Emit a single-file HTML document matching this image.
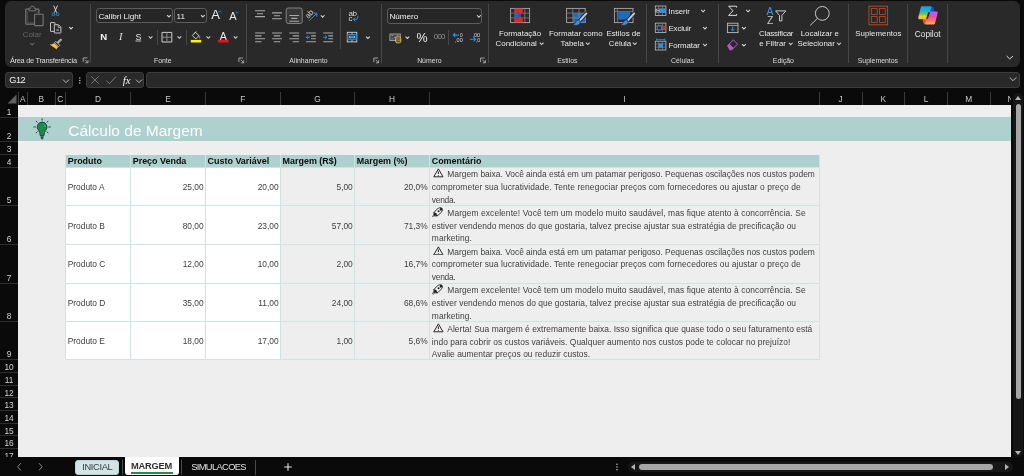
<!DOCTYPE html>
<html lang="pt-BR">
<head>
<meta charset="utf-8">
<title>Cálculo de Margem</title>
<style>
*{box-sizing:border-box;margin:0;padding:0}
html,body{width:1024px;height:476px;overflow:hidden;background:#0a0a0a;font-family:"Liberation Sans",sans-serif;}
#app{position:relative;width:1024px;height:476px;overflow:hidden;will-change:transform;color:#e6e6e6}
.abs{position:absolute}
/* ribbon */
#ribbon{position:absolute;left:5.2px;top:0.5px;width:1014.4px;height:66px;background:#292929;border-radius:6px}
.gl{position:absolute;top:55.7px;font-size:6.9px;line-height:9px;color:#dcdcdc;white-space:nowrap;transform:translateX(-50%)}
.vsep{position:absolute;top:4px;width:1px;height:59px;background:#474747}
.t{position:absolute;white-space:nowrap;color:#e8e8e8;font-size:7.9px;line-height:10px}
.tc{transform:translateX(-50%);text-align:center}
.combo{position:absolute;height:15.3px;border:1px solid #5c5c5c;border-radius:3px;background:#262626;font-size:8.1px;line-height:13.3px;color:#f0f0f0;padding:0.9px 0 0 1.2px;white-space:nowrap}
.tabt{font-size:9.3px;line-height:11px;white-space:nowrap}
/* formula bar */
.fbox{position:absolute;top:72px;height:16px;background:#292929;border:1px solid #3d3d3d;border-radius:3px}
/* grid */
#sheet{position:absolute;left:18px;top:104.5px;width:993.3px;height:352.2px;background:#eeeeee}
.ch{position:absolute;top:92.8px;height:12px;font-size:8.3px;line-height:12px;color:#c8c8c8;text-align:center}
.cl{position:absolute;top:92px;width:1px;height:12.5px;background:#3a3a3a}
.rh{position:absolute;left:0;width:18px;text-align:center;font-size:8.3px;line-height:10px;color:#d6d6d6}
.rl{position:absolute;left:0;width:18px;height:1px;background:#2e2e2e}
#title{font-size:15.5px;line-height:18px;color:#fbfdfd;white-space:nowrap}
.cell{position:absolute;font-size:8.4px;color:#404040;white-space:nowrap;overflow:hidden}
.hd{background:#aed0cf;color:#0c0c0c;font-weight:bold;padding-left:2.2px;font-size:8.95px;line-height:13.6px}
.w{background:#ffffff}
.g{background:#eeeeee}
.num{text-align:right;padding-right:1.8px}
.txt{padding-left:2.2px}
.bd{position:absolute;background:#cfe3e1}
.cm{position:absolute;left:431.8px;width:388px;font-size:8.43px;line-height:12.75px;color:#404040;white-space:nowrap}
.i1{display:inline-block;width:15.5px;height:10px;padding-left:1px;text-align:left;vertical-align:-1.3px;line-height:0}
.ic{display:block}
</style>
</head>
<body>
<div id="app">
<!-- ribbon -->
<div id="ribbon"></div>
<div class="vsep" style="left:90.2px"></div>
<div class="vsep" style="left:246.2px"></div>
<div class="vsep" style="left:381.2px"></div>
<div class="vsep" style="left:488.3px"></div>
<div class="vsep" style="left:646.3px"></div>
<div class="vsep" style="left:718.2px"></div>
<div class="vsep" style="left:848px"></div>
<div class="vsep" style="left:907.2px"></div>
<div class="vsep" style="left:947px"></div>
<div class="vsep" style="left:157.2px;top:29.5px;height:15.5px"></div>
<div class="vsep" style="left:186.3px;top:29.5px;height:15.5px"></div>
<div class="vsep" style="left:340.2px;top:8px;height:40.5px"></div>
<div class="vsep" style="left:448.2px;top:29.5px;height:15.5px"></div>
<!-- group labels -->
<div class="gl" style="left:43.3px;font-size:7.4px;letter-spacing:-0.28px">Área de Transferência</div>
<div class="gl" style="left:162.8px">Fonte</div>
<div class="gl" style="left:308.5px">Alinhamento</div>
<div class="gl" style="left:429.4px">Número</div>
<div class="gl" style="left:567.3px">Estilos</div>
<div class="gl" style="left:682.6px">Células</div>
<div class="gl" style="left:783.4px">Edição</div>
<div class="gl" style="left:877.9px">Suplementos</div>
<!-- clipboard group -->
<div class="t tc" style="left:32.2px;top:29.6px;color:#666666">Colar</div>
<!-- font group -->
<div class="combo" style="left:96.2px;top:8.2px;width:76.6px">Calibri Light</div>
<div class="combo" style="left:174.4px;top:8.2px;width:32.3px">11</div>
<div class="t" style="left:211.2px;top:8.1px;font-size:13px;line-height:14px;color:#ececec">A</div>
<div class="t" style="left:229.2px;top:9.7px;font-size:11px;line-height:12px;color:#ececec">A</div>
<div class="t" style="left:100.2px;top:31.6px;font-size:9.6px;font-weight:bold;color:#f4f4f4">N</div>
<div class="t" style="left:119px;top:32.3px;font-size:10.5px;font-style:italic;font-family:'Liberation Serif',serif;color:#e0e0e0">I</div>
<div class="t" style="left:135.5px;top:31.9px;font-size:9px;color:#e0e0e0">S</div>
<div class="t" style="left:217.8px;top:30.2px;font-size:10.6px;line-height:12px;color:#ececec;width:11px;text-align:center">A</div>
<!-- number group -->
<div class="combo" style="left:387.3px;top:8.3px;width:95.2px;height:15.4px">Número</div>
<div class="t" style="left:416.6px;top:30.8px;font-size:12.5px;line-height:14px;color:#ececec;letter-spacing:-0.4px">%</div>
<div class="t" style="left:433.7px;top:32.2px;font-size:8px;color:#909090;letter-spacing:-0.75px">000</div>
<!-- styles group -->
<div class="t tc" style="left:520px;top:28.7px">Formatação</div>
<div class="t tc" style="left:516.2px;top:38.9px">Condicional</div>
<div class="t tc" style="left:575.8px;top:28.7px">Formatar como</div>
<div class="t tc" style="left:572.2px;top:38.9px">Tabela</div>
<div class="t tc" style="left:623.5px;top:28.7px">Estilos de</div>
<div class="t tc" style="left:620px;top:38.9px">Célula</div>
<!-- cells group -->
<div class="t" style="left:668.5px;top:6.9px;letter-spacing:-0.1px">Inserir</div>
<div class="t" style="left:668.5px;top:23.9px;letter-spacing:-0.15px">Excluir</div>
<div class="t" style="left:668.5px;top:41px;letter-spacing:-0.1px">Formatar</div>
<!-- editing group -->
<div class="t tc" style="left:776.2px;top:28.7px;letter-spacing:-0.2px">Classificar</div>
<div class="t tc" style="left:772.6px;top:39px">e Filtrar</div>
<div class="t tc" style="left:819.8px;top:28.7px">Localizar e</div>
<div class="t tc" style="left:816.2px;top:39px">Selecionar</div>
<div class="t tc" style="left:878.3px;top:28.5px">Suplementos</div>
<div class="t tc" style="left:927.7px;top:28.5px;font-size:8.3px">Copilot</div>
<svg class="abs" style="left:0;top:0" width="1024" height="68" viewBox="0 0 1024 68">
<!-- paste -->
<path d="M29 9.2H26.4Q25.8 9.2 25.8 9.8V23.5Q25.8 24.1 26.4 24.1H34.2M35.8 9.2H38.3Q38.9 9.2 38.9 9.8V13.6" fill="none" stroke="#767676" stroke-width="1.2"/>
<path d="M27.6 11V22.4H34M37.2 11V13.4" fill="none" stroke="#555" stroke-width="0.7"/>
<path d="M29 10.8V8.3H30.7V7.3Q30.7 6.3 31.6 6.3H33.2Q34.1 6.3 34.1 7.3V8.3H35.8V10.8Z" fill="none" stroke="#767676" stroke-width="1"/>
<rect x="34.6" y="14.3" width="8.5" height="11.3" rx="0.5" fill="#292929" stroke="#767676" stroke-width="1.1"/>
<path d="M30.1 43.10L32.1 44.90L34.1 43.10" fill="none" stroke="#6a6a6a" stroke-width="1.05"/>
<!-- scissors -->
<path d="M53.7 5.6L56.6 12.6M57.5 5.6L54.4 12.6" fill="none" stroke="#e0e0e0" stroke-width="0.9"/>
<circle cx="53.5" cy="14.3" r="1.35" fill="none" stroke="#2f8fe0" stroke-width="0.9"/><circle cx="57.6" cy="14.3" r="1.35" fill="none" stroke="#2f8fe0" stroke-width="0.9"/>
<!-- copy -->
<path d="M54.2 31.4H50.9Q50.5 31.4 50.5 31V23Q50.5 22.6 50.9 22.6H54.6Q55 22.6 55 23V24.4" fill="none" stroke="#d6d6d6" stroke-width="0.9"/>
<path d="M54.3 24.7H58.4L60.9 27.2V32.6Q60.9 33 60.5 33H54.7Q54.3 33 54.3 32.6Z" fill="none" stroke="#d6d6d6" stroke-width="0.9"/>
<path d="M58.2 24.9V27.4H60.7" fill="none" stroke="#d6d6d6" stroke-width="0.7"/>
<path d="M56.4 29.2H59V30.9H56.4Z" fill="#8a8a8a"/>
<path d="M69.2 27.05L71.0 28.95L72.8 27.05" fill="none" stroke="#d4d4d4" stroke-width="1.05"/>
<!-- format painter -->
<path d="M60.8 39.7L58.2 42.3" stroke="#d8d8d8" stroke-width="2" stroke-linecap="round" fill="none"/><path d="M60.7 39.8L58.6 41.9" stroke="#292929" stroke-width="0.6" stroke-linecap="round" fill="none"/>
<path d="M55.8 41.4L59.8 45.4L58.5 46.7L54.5 42.7Z" fill="#292929" stroke="#d8d8d8" stroke-width="0.8" stroke-linejoin="round"/>
<path d="M54.3 43.2L58 46.9L56.6 48.9L50.5 44.7Z" fill="#f6c84a"/>
<path d="M50.5 44.7L56.6 48.9" stroke="#ee9a2c" stroke-width="1" stroke-linecap="round"/>
<path d="M87.4 57.9H83.2V62.1" fill="none" stroke="#bdbdbd" stroke-width="0.8"/>
<path d="M85.0 59.7L87.8 62.5M88.0 60.1V62.7H85.4" fill="none" stroke="#bdbdbd" stroke-width="0.8"/>
<path d="M167.1 15.05L168.9 16.95L170.8 15.05" fill="none" stroke="#d4d4d4" stroke-width="1.05"/>
<path d="M201.0 15.05L202.8 16.95L204.7 15.05" fill="none" stroke="#d4d4d4" stroke-width="1.05"/>
<path d="M218.2 12.4L219.7 10.9L221.2 12.4" fill="none" stroke="#2f8fe0" stroke-width="0.9"/>
<path d="M235.6 11.8L237 13.2L238.4 11.8" fill="none" stroke="#2f8fe0" stroke-width="0.9"/>
<path d="M135.4 41H141.2" stroke="#d0d0d0" stroke-width="0.9"/>
<path d="M148.8 36.35L150.6 38.25L152.4 36.35" fill="none" stroke="#d4d4d4" stroke-width="1.05"/>
<!-- borders -->
<path d="M162 32.4V42H171.8V32.4M162 32.4H171.8" fill="none" stroke="#d0d0d0" stroke-width="1"/>
<path d="M166.9 32.4V42M162 37.2H171.8" fill="none" stroke="#9a9a9a" stroke-width="0.9"/>
<path d="M177.6 36.35L179.4 38.25L181.2 36.35" fill="none" stroke="#d4d4d4" stroke-width="1.05"/>
<!-- fill -->
<path d="M195.4 32.3L199 35.7L195.9 38.9L192.3 35.5Z" fill="none" stroke="#dcdcdc" stroke-width="0.9"/>
<path d="M194.2 33.3L196.6 31.6" stroke="#dcdcdc" stroke-width="0.8"/>
<path d="M199.4 35.3Q200.6 36.9 200.4 38.3Q199.6 39 199 38.2Q198.8 36.8 199.4 35.3Z" fill="#2f8fe0"/>
<rect x="190.8" y="39.9" width="10.4" height="2.6" fill="#fff100"/>
<path d="M206.5 36.35L208.3 38.25L210.2 36.35" fill="none" stroke="#d4d4d4" stroke-width="1.05"/>
<rect x="217.9" y="39.9" width="10.6" height="2.6" fill="#e81123"/>
<path d="M233.8 36.35L235.6 38.25L237.4 36.35" fill="none" stroke="#d4d4d4" stroke-width="1.05"/>
<path d="M243.1 58.0H238.9V62.2" fill="none" stroke="#bdbdbd" stroke-width="0.8"/>
<path d="M240.7 59.8L243.5 62.6M243.7 60.2V62.8H241.1" fill="none" stroke="#bdbdbd" stroke-width="0.8"/>
<path d="M255.1 10.8H265.0M257.0 13.7H263.1M255.1 16.6H265.0" stroke="#a8a8a8" stroke-width="1.1" fill="none"/>
<path d="M272.1 12.9H281.9M274.0 15.8H280.0M272.1 18.7H281.9" stroke="#a8a8a8" stroke-width="1.1" fill="none"/>
<rect x="286.2" y="8" width="16" height="15.5" rx="2" fill="#383838" stroke="#8c8c8c" stroke-width="0.9"/>
<path d="M289.3 15.5H299.1M291.2 18.4H297.2M289.3 21.3H299.1" stroke="#a8a8a8" stroke-width="1.1" fill="none"/>
<!-- orientation -->
<text x="305.2" y="16.8" font-size="7.8" fill="#d4d4d4" font-family="Liberation Sans, sans-serif" letter-spacing="-0.3" transform="rotate(-50 309.2 14.2)">ab</text>
<path d="M309.2 20.8L316.6 13.4M313.4 13.2H316.8V16.6" fill="none" stroke="#2f8fe0" stroke-width="1"/>
<path d="M320.8 15.25L322.6 17.15L324.5 15.25" fill="none" stroke="#d4d4d4" stroke-width="1.05"/>
<!-- wrap -->
<text x="348.4" y="15.8" font-size="8" fill="#d8d8d8" font-family="Liberation Sans, sans-serif" letter-spacing="-0.4">ab</text>
<text x="348.4" y="21.4" font-size="8" fill="#d8d8d8" font-family="Liberation Sans, sans-serif">c</text>
<path d="M357.8 16V17.4Q357.8 19.4 355.8 19.4H353.6M355.4 17.4L353.4 19.4L355.4 21.4" fill="none" stroke="#2f8fe0" stroke-width="1"/>
<path d="M255.1 33.0H265.0M255.1 35.9H261.5M255.1 38.8H265.0M255.1 41.7H261.5" stroke="#a8a8a8" stroke-width="1.1" fill="none"/>
<path d="M272.1 33.0H281.9M273.8 35.9H280.2M272.1 38.8H281.9M273.8 41.7H280.2" stroke="#a8a8a8" stroke-width="1.1" fill="none"/>
<path d="M289.3 33.0H299.1M292.7 35.9H299.1M289.3 38.8H299.1M292.7 41.7H299.1" stroke="#a8a8a8" stroke-width="1.1" fill="none"/>
<path d="M306.1 33.0H315.9M311.1 35.9H315.9M311.1 38.8H315.9M306.1 41.7H315.9" stroke="#a8a8a8" stroke-width="1.1" fill="none"/>
<path d="M310 37.3H306.4M308.2 35.5L306.4 37.3L308.2 39.1" fill="none" stroke="#2f8fe0" stroke-width="1"/>
<path d="M323.3 33.0H333.1M328.3 35.9H333.1M328.3 38.8H333.1M323.3 41.7H333.1" stroke="#a8a8a8" stroke-width="1.1" fill="none"/>
<path d="M323.4 37.3H327M325.2 35.5L327 37.3L325.2 39.1" fill="none" stroke="#2f8fe0" stroke-width="1"/>
<!-- merge -->
<rect x="347.3" y="32.3" width="9.5" height="9.6" fill="none" stroke="#d6d6d6" stroke-width="0.9"/>
<rect x="347.5" y="34.5" width="9.1" height="5.2" fill="#1a4f80" stroke="#2f8fe0" stroke-width="0.9"/>
<path d="M349.2 37.1H354.9M350.4 35.9L349.2 37.1L350.4 38.3M353.7 35.9L354.9 37.1L353.7 38.3" fill="none" stroke="#bfe0ff" stroke-width="0.7"/>
<path d="M352 32.3V34.2M352 40V41.9" stroke="#d6d6d6" stroke-width="0.8"/>
<path d="M366.0 36.55L367.9 38.45L369.8 36.55" fill="none" stroke="#d4d4d4" stroke-width="1.05"/>
<path d="M378.0 58.0H373.8V62.2" fill="none" stroke="#bdbdbd" stroke-width="0.8"/>
<path d="M375.6 59.8L378.4 62.6M378.6 60.2V62.8H376.0" fill="none" stroke="#bdbdbd" stroke-width="0.8"/>
<path d="M477.0 15.25L478.9 17.15L480.8 15.25" fill="none" stroke="#d4d4d4" stroke-width="1.05"/>
<!-- currency -->
<rect x="389.9" y="34" width="10.4" height="6.6" fill="#484848" stroke="#a8a8a8" stroke-width="0.9"/>
<path d="M391.6 35.6H393M391.6 39H393M397 35.6H398.6M394 37.3H396" stroke="#9c9c9c" stroke-width="0.9"/>
<rect x="395.6" y="37" width="5.2" height="5.8" rx="1.4" fill="#292929" stroke="#f0c44c" stroke-width="0.9"/>
<path d="M395.8 39H400.6M395.8 40.9H400.6" stroke="#f0c44c" stroke-width="0.8"/>
<path d="M405.5 36.55L407.4 38.45L409.2 36.55" fill="none" stroke="#d4d4d4" stroke-width="1.05"/>
<path d="M453.2 35.1H458.9M455.2 33.1L453.2 35.1L455.2 37.1" fill="none" stroke="#2f8fe0" stroke-width="1.05"/>
<text x="460.1" y="36.8" font-size="6.2" textLength="2.6" font-family="Liberation Sans, sans-serif" fill="#d6d6d6" lengthAdjust="spacingAndGlyphs">0</text>
<text x="455.1" y="42.4" font-size="6.2" textLength="7.6" font-family="Liberation Sans, sans-serif" fill="#d6d6d6" lengthAdjust="spacingAndGlyphs">,00</text>
<text x="472.4" y="36.8" font-size="6.2" textLength="7.6" font-family="Liberation Sans, sans-serif" fill="#d6d6d6" lengthAdjust="spacingAndGlyphs">,00</text>
<path d="M469.8 39.3H475.6M473.6 37.3L475.6 39.3L473.6 41.3" fill="none" stroke="#2f8fe0" stroke-width="1.05"/>
<text x="475.8" y="42.4" font-size="6.2" textLength="4.2" font-family="Liberation Sans, sans-serif" fill="#d6d6d6" lengthAdjust="spacingAndGlyphs">,0</text>
<path d="M484.8 58.0H480.6V62.2" fill="none" stroke="#bdbdbd" stroke-width="0.8"/>
<path d="M482.4 59.8L485.2 62.6M485.4 60.2V62.8H482.8" fill="none" stroke="#bdbdbd" stroke-width="0.8"/>
<!-- cond format -->
<rect x="510.6" y="8.4" width="19" height="14.2" fill="none" stroke="#a8a8a8" stroke-width="0.9"/>
<path d="M510.6 13.1H529.6M510.6 17.9H529.6M515.3 8.4V22.6M520.1 8.4V22.6M524.8 8.4V22.6" stroke="#8c8c8c" stroke-width="0.7"/>
<rect x="514.2" y="8.6" width="8.6" height="4.2" fill="#e3262d"/><rect x="514.2" y="13.6" width="5.2" height="3.8" fill="#1b6ac6"/><rect x="514.2" y="18.2" width="8.6" height="4.2" fill="#e3262d"/>
<path d="M539.8 42.65L541.6 44.55L543.5 42.65" fill="none" stroke="#d4d4d4" stroke-width="1.05"/>
<!-- format as table -->
<rect x="566.6" y="8.4" width="18.6" height="14.2" fill="none" stroke="#a8a8a8" stroke-width="0.9"/>
<rect x="573" y="13.2" width="12" height="9.2" fill="#1b6ac6"/>
<path d="M566.6 13.1H585.2M566.6 17.9H585.2M572.8 8.4V22.6M579 8.4V22.6" stroke="#8c8c8c" stroke-width="0.7"/>
<path d="M586.6 13.2L579.4 21" stroke="#292929" stroke-width="3.6" stroke-linecap="round"/><path d="M586.4 13.4L579.6 20.8" stroke="#d0d0d0" stroke-width="1.8" stroke-linecap="round"/>
<path d="M579.8 20.2Q581.4 22.8 578.6 24.8Q575.6 26.2 572.8 24.6Q575.6 23.8 576 21.4Q577.8 19.2 579.8 20.2Z" fill="#3a8ee6" stroke="#292929" stroke-width="0.6"/>
<path d="M585.9 42.65L587.8 44.55L589.6 42.65" fill="none" stroke="#d4d4d4" stroke-width="1.05"/>
<!-- cell styles -->
<rect x="614.4" y="8.4" width="18.6" height="14.2" fill="none" stroke="#a8a8a8" stroke-width="0.9"/>
<path d="M614.4 11.4H633M617.4 8.4V22.6" stroke="#8c8c8c" stroke-width="0.7"/>
<rect x="618.2" y="12" width="12" height="7.6" fill="#1b6ac6"/>
<path d="M634.4 13.2L627.2 21" stroke="#292929" stroke-width="3.6" stroke-linecap="round"/><path d="M634.2 13.4L627.4 20.8" stroke="#d0d0d0" stroke-width="1.8" stroke-linecap="round"/>
<path d="M627.6 20.2Q629.2 22.8 626.4 24.8Q623.4 26.2 620.6 24.6Q623.4 23.8 623.8 21.4Q625.6 19.2 627.6 20.2Z" fill="#3a8ee6" stroke="#292929" stroke-width="0.6"/>
<path d="M632.9 42.65L634.8 44.55L636.6 42.65" fill="none" stroke="#d4d4d4" stroke-width="1.05"/>
<!-- insert -->
<rect x="655.3" y="6" width="10.6" height="9.4" fill="none" stroke="#bdbdbd" stroke-width="0.8"/>
<path d="M655.3 9.1H665.9M655.3 12.3H665.9M658.8 6V15.4M662.4 6V15.4" stroke="#9a9a9a" stroke-width="0.6"/>
<rect x="659" y="8.6" width="6.8" height="4.2" fill="#2f8fe0"/>
<path d="M655.4 10.7H660M657.2 8.9L655.4 10.7L657.2 12.5" fill="none" stroke="#8cc4ff" stroke-width="0.9"/>
<path d="M701.2 9.85L703.1 11.75L705.0 9.85" fill="none" stroke="#d4d4d4" stroke-width="1.05"/>
<!-- delete -->
<rect x="655.3" y="23.1" width="10.6" height="9.4" fill="none" stroke="#bdbdbd" stroke-width="0.8"/>
<path d="M655.3 26.2H665.9M655.3 29.4H665.9M658.8 23.1V32.5M662.4 23.1V32.5" stroke="#9a9a9a" stroke-width="0.6"/>
<rect x="657.2" y="26" width="4.4" height="3.8" fill="#292929" stroke="#2f8fe0" stroke-width="0.9"/>
<path d="M662.4 26L665.6 29.6M665.6 26L662.4 29.6" stroke="#e3262d" stroke-width="1"/>
<path d="M703.1 27.05L705.0 28.95L706.9 27.05" fill="none" stroke="#d4d4d4" stroke-width="1.05"/>
<!-- format -->
<rect x="655.3" y="41.2" width="10.6" height="8.8" fill="none" stroke="#bdbdbd" stroke-width="0.8"/>
<path d="M655.3 44.1H665.9M655.3 47.1H665.9M658.8 41.2V50.0M662.4 41.2V50.0" stroke="#9a9a9a" stroke-width="0.6"/>
<rect x="658.4" y="43.4" width="4.6" height="4.4" fill="#2f8fe0"/>
<path d="M656.6 39.6H664.8M656.6 38.4V40.8M664.8 38.4V40.8" stroke="#2f8fe0" stroke-width="0.8"/>
<path d="M703.1 43.85L705.0 45.75L706.9 43.85" fill="none" stroke="#d4d4d4" stroke-width="1.05"/>
<!-- sigma -->
<path d="M736.6 7.6V6.2H728.6L733 10.8L728.6 15.4H736.6V14" fill="none" stroke="#dcdcdc" stroke-width="1"/>
<path d="M746.2 9.85L748.1 11.75L750.0 9.85" fill="none" stroke="#d4d4d4" stroke-width="1.05"/>
<!-- fill down -->
<rect x="727.4" y="23.2" width="10.6" height="9.4" fill="none" stroke="#bdbdbd" stroke-width="0.9"/><path d="M727.4 25.4H738" stroke="#bdbdbd" stroke-width="0.8"/>
<path d="M732.7 26.4V30.8M730.8 29L732.7 30.9L734.6 29" fill="none" stroke="#2f8fe0" stroke-width="1"/>
<path d="M742.0 27.05L743.9 28.95L745.8 27.05" fill="none" stroke="#d4d4d4" stroke-width="1.05"/>
<!-- eraser -->
<path d="M727.6 45.6L733.4 39.9L737.6 44.1L731.8 49.8H729.8Z" fill="none" stroke="#c860d6" stroke-width="0.9" stroke-linejoin="round"/>
<path d="M727.6 45.6L729.4 43.8L733.6 48L731.8 49.8H729.8Z" fill="#c24fd0"/>
<path d="M742.0 44.05L743.9 45.95L745.8 44.05" fill="none" stroke="#d4d4d4" stroke-width="1.05"/>
<!-- sort filter -->
<text x="766.6" y="15" font-size="10.4" fill="#3a96e8" font-family="Liberation Sans, sans-serif">A</text>
<text x="767" y="24.4" font-size="10.4" fill="#c8c8c8" font-family="Liberation Sans, sans-serif">Z</text>
<path d="M775.6 10.9H785.8L781.9 15.4V20.9H779.5V15.4Z" fill="none" stroke="#dcdcdc" stroke-width="0.9" stroke-linejoin="round"/>
<path d="M788.9 42.75L790.7 44.65L792.6 42.75" fill="none" stroke="#d4d4d4" stroke-width="1.05"/>
<!-- find -->
<circle cx="822.3" cy="13.4" r="6.9" fill="none" stroke="#d8d8d8" stroke-width="0.9"/><path d="M817.4 18.4L810.2 25.4" stroke="#d8d8d8" stroke-width="0.9"/>
<path d="M837.1 42.75L839.0 44.65L840.9 42.75" fill="none" stroke="#d4d4d4" stroke-width="1.05"/>
<!-- addins -->
<rect x="869" y="6.2" width="18.6" height="18.6" fill="none" stroke="#c24c1d" stroke-width="0.9"/>
<rect x="871.4" y="8.6" width="5.8" height="5.8" fill="none" stroke="#c24c1d" stroke-width="0.8"/>
<rect x="879.4" y="8.6" width="5.8" height="5.8" fill="none" stroke="#c24c1d" stroke-width="0.8"/>
<rect x="871.4" y="16.6" width="5.8" height="5.8" fill="none" stroke="#c24c1d" stroke-width="0.8"/>
<rect x="879.4" y="16.6" width="5.8" height="5.8" fill="none" stroke="#c24c1d" stroke-width="0.8"/>
<!-- copilot -->
<defs><linearGradient id="cpa" x1="0" y1="0" x2="0" y2="1"><stop offset="0" stop-color="#1b9cf2"/><stop offset="0.35" stop-color="#22b4c8"/><stop offset="0.62" stop-color="#6cc850"/><stop offset="0.85" stop-color="#eed21e"/><stop offset="1" stop-color="#f4c020"/></linearGradient><linearGradient id="cpc" x1="0" y1="0" x2="0" y2="1"><stop offset="0" stop-color="#b45cf4"/><stop offset="0.4" stop-color="#ec4fa6"/><stop offset="0.75" stop-color="#f8707a"/><stop offset="1" stop-color="#ffa646"/></linearGradient></defs>
<path d="M929 7.2H931.6Q932.6 7.2 932.9 8.2L933.6 11.4H929.6Z" fill="#1b4fd2" stroke="#1b4fd2" stroke-width="1.6" stroke-linejoin="round"/>
<path d="M923.6 19.6H926.6L925.6 23.4Q924.6 23.8 924.2 22.8Z" fill="#f0502a" stroke="#f0502a" stroke-width="1.6" stroke-linejoin="round"/>
<path d="M922 7.4H930.2L926.2 18H919.4Z" fill="url(#cpa)" stroke="url(#cpa)" stroke-width="2.4" stroke-linejoin="round"/>
<path d="M930.4 12.6H936.6L933.8 23.2H926.4Z" fill="url(#cpc)" stroke="url(#cpc)" stroke-width="2.4" stroke-linejoin="round"/>
<path d="M928.2 12.2H930L927.9 18.8H926.1Z" fill="#262626"/>
<path d="M1006.6 56.00L1009.8 59.00L1013.0 56.00" fill="none" stroke="#d8d8d8" stroke-width="1.0"/>
</svg>
<!-- formula bar -->
<div class="fbox" style="left:5.2px;width:67.8px"></div>
<div class="abs" style="left:9.3px;top:74.6px;font-size:9.2px;line-height:11px;color:#f0f0f0;letter-spacing:-0.55px">G12</div>
<svg class="abs" style="left:61.5px;top:77px" width="8" height="8" viewBox="0 0 8 8"><path d="M1 2.6L4 5.6L7 2.6" fill="none" stroke="#d0d0d0" stroke-width="0.9"/></svg>
<svg class="abs" style="left:78px;top:76px" width="4" height="9" viewBox="0 0 4 9"><circle cx="1.8" cy="2" r="0.7" fill="#cfcfcf"/><circle cx="1.8" cy="4.5" r="0.7" fill="#cfcfcf"/><circle cx="1.8" cy="7" r="0.7" fill="#cfcfcf"/></svg>
<div class="fbox" style="left:86.2px;width:57.6px"></div>
<svg class="abs" style="left:90px;top:75px" width="28" height="10" viewBox="0 0 28 10"><path d="M1.2 1.2L8.8 8.8M8.8 1.2L1.2 8.8" stroke="#8a8a8a" stroke-width="0.8" fill="none"/><path d="M16.2 5.6L19.4 8.6L26.2 1.4" stroke="#8a8a8a" stroke-width="0.8" fill="none"/></svg>
<div class="abs" style="left:122.8px;top:74.2px;font-family:'Liberation Serif',serif;font-style:italic;font-weight:normal;font-size:11px;line-height:12px;color:#f2f2f2;letter-spacing:-0.2px">fx</div>
<svg class="abs" style="left:134.7px;top:77px" width="8" height="8" viewBox="0 0 8 8"><path d="M1 2.6L4 5.6L7 2.6" fill="none" stroke="#cfcfcf" stroke-width="0.9"/></svg>
<div class="fbox" style="left:146.4px;width:873.4px"></div>
<svg class="abs" style="left:1009.2px;top:75.4px" width="8" height="8" viewBox="0 0 8 8"><path d="M0.8 2.5L4 5.7L7.2 2.5" fill="none" stroke="#d0d0d0" stroke-width="0.9"/></svg>
<!-- column headers -->
<div class="ch" style="left:18px;width:9.5px">A</div>
<div class="cl" style="left:27.0px"></div>
<div class="ch" style="left:27.5px;width:27.5px">B</div>
<div class="cl" style="left:54.5px"></div>
<div class="ch" style="left:55px;width:10.5px">C</div>
<div class="cl" style="left:65.0px"></div>
<div class="ch" style="left:65.5px;width:65.0px">D</div>
<div class="cl" style="left:130.0px"></div>
<div class="ch" style="left:130.5px;width:74.9px">E</div>
<div class="cl" style="left:204.9px"></div>
<div class="ch" style="left:205.4px;width:75.0px">F</div>
<div class="cl" style="left:279.9px"></div>
<div class="ch" style="left:280.4px;width:74.2px">G</div>
<div class="cl" style="left:354.1px"></div>
<div class="ch" style="left:354.6px;width:74.9px">H</div>
<div class="cl" style="left:429.0px"></div>
<div class="ch" style="left:429.5px;width:389.8px">I</div>
<div class="cl" style="left:818.8px"></div>
<div class="ch" style="left:819.3px;width:42.7px">J</div>
<div class="cl" style="left:861.5px"></div>
<div class="ch" style="left:862px;width:42.6px">K</div>
<div class="cl" style="left:904.1px"></div>
<div class="ch" style="left:904.6px;width:42.7px">L</div>
<div class="cl" style="left:946.8px"></div>
<div class="ch" style="left:947.3px;width:42.7px">M</div>
<div class="cl" style="left:989.5px"></div>
<div class="ch" style="left:990px;width:21.3px;overflow:hidden;text-align:left"><span style="margin-left:17.5px">N</span></div>
<div class="cl" style="left:17.5px"></div>
<svg class="abs" style="left:7px;top:94px" width="10" height="10" viewBox="0 0 10 10"><path d="M9.5 0.5V9.5H0.5Z" fill="#5f5f5f"/></svg>
<!-- row headers -->
<div class="rh" style="top:106.9px">1</div>
<div class="rl" style="top:116.7px"></div>
<div class="rh" style="top:130.9px">2</div>
<div class="rl" style="top:140.7px"></div>
<div class="rh" style="top:144.4px">3</div>
<div class="rl" style="top:154.2px"></div>
<div class="rh" style="top:156.7px">4</div>
<div class="rl" style="top:166.5px"></div>
<div class="rh" style="top:195.3px">5</div>
<div class="rl" style="top:205.1px"></div>
<div class="rh" style="top:234.0px">6</div>
<div class="rl" style="top:243.8px"></div>
<div class="rh" style="top:272.7px">7</div>
<div class="rl" style="top:282.5px"></div>
<div class="rh" style="top:311.3px">8</div>
<div class="rl" style="top:321.1px"></div>
<div class="rh" style="top:349.3px">9</div>
<div class="rl" style="top:359.1px"></div>
<div class="rh" style="top:362.0px">10</div>
<div class="rl" style="top:371.8px"></div>
<div class="rh" style="top:374.7px">11</div>
<div class="rl" style="top:384.5px"></div>
<div class="rh" style="top:387.5px">12</div>
<div class="rl" style="top:397.3px"></div>
<div class="rh" style="top:400.2px">13</div>
<div class="rl" style="top:410.0px"></div>
<div class="rh" style="top:412.9px">14</div>
<div class="rl" style="top:422.7px"></div>
<div class="rh" style="top:425.6px">15</div>
<div class="rl" style="top:435.4px"></div>
<div class="rh" style="top:438.3px">16</div>
<div class="rl" style="top:448.1px"></div>
<div class="rh" style="top:451.1px">17</div>
<div class="rl" style="top:460.9px"></div>
<div class="rh" style="top:463.8px">18</div>
<div class="rl" style="top:473.6px"></div>
<!-- sheet -->
<div id="sheet"></div>
<div class="abs" style="left:18px;top:117.2px;width:993.3px;height:24.0px;background:#aed0cf"></div>
<div class="abs" id="title" style="left:68.3px;top:121.6px">Cálculo de Margem</div>
<svg class="abs" style="left:30px;top:116px" width="24" height="26" viewBox="30 116 24 26"><path d="M42.1 118.3V120.5M35.9 120.9L37.5 122.5M48.3 120.9L46.7 122.5M33.4 127H35.9M48.3 127H50.8M35.9 133.1L37.5 131.5M48.3 133.1L46.7 131.5" stroke="#35423f" stroke-width="1" fill="none"/><path d="M42.1 122.1A4.9 4.9 0 0 1 45.6 130.4Q44.2 132 44 135.6H40.2Q40 132 38.6 130.4A4.9 4.9 0 0 1 42.1 122.1Z" fill="#1b8c4b" stroke="#163f2a" stroke-width="0.9"/><path d="M43.8 124.3Q45.1 125.2 45.2 126.8" stroke="#6cc894" stroke-width="0.7" fill="none"/><path d="M40.4 136.3H43.8L43.3 138.3L42.1 139.7L40.9 138.3Z" fill="#3f4a48"/></svg>
<div class="cell hd" style="left:65.5px;top:154.7px;width:65.0px;height:12.3px">Produto</div>
<div class="cell hd" style="left:130.5px;top:154.7px;width:74.9px;height:12.3px">Preço Venda</div>
<div class="cell hd" style="left:205.4px;top:154.7px;width:75.0px;height:12.3px">Custo Variável</div>
<div class="cell hd" style="left:280.4px;top:154.7px;width:74.2px;height:12.3px">Margem (R$)</div>
<div class="cell hd" style="left:354.6px;top:154.7px;width:74.9px;height:12.3px">Margem (%)</div>
<div class="cell hd" style="left:429.5px;top:154.7px;width:389.8px;height:12.3px">Comentário</div>
<div class="cell w txt" style="left:65.5px;top:167px;width:65.0px;height:38.6px;line-height:40.1px">Produto A</div>
<div class="cell w num" style="left:130.5px;top:167px;width:74.9px;height:38.6px;line-height:40.1px">25,00</div>
<div class="cell w num" style="left:205.4px;top:167px;width:75.0px;height:38.6px;line-height:40.1px">20,00</div>
<div class="cell g num" style="left:280.4px;top:167px;width:74.2px;height:38.6px;line-height:40.1px">5,00</div>
<div class="cell g num" style="left:354.6px;top:167px;width:74.9px;height:38.6px;line-height:40.1px">20,0%</div>
<div class="cell g" style="left:429.5px;top:167px;width:389.8px;height:38.6px"></div>
<div class="cm" style="top:168.2px"><span class="i1"><svg class="ic" width="10.8" height="9.7" viewBox="0 0 10 9"><path d="M5 0.8L9.3 8.2H0.7Z" fill="none" stroke="#222" stroke-width="0.9" stroke-linejoin="round"/><path d="M5 3.2V5.6M5 6.5V7.2" stroke="#222" stroke-width="0.9"/></svg></span><span style="letter-spacing:-0.015px">Margem baixa. Você ainda está em um patamar perigoso. Pequenas oscilações nos custos podem</span><br><span style="letter-spacing:0.082px">comprometer sua lucratividade. Tente renegociar preços com fornecedores ou ajustar o preço de</span><br><span style="letter-spacing:-0.283px">venda.</span></div>
<div class="cell w txt" style="left:65.5px;top:205.6px;width:65.0px;height:38.7px;line-height:40.2px">Produto B</div>
<div class="cell w num" style="left:130.5px;top:205.6px;width:74.9px;height:38.7px;line-height:40.2px">80,00</div>
<div class="cell w num" style="left:205.4px;top:205.6px;width:75.0px;height:38.7px;line-height:40.2px">23,00</div>
<div class="cell g num" style="left:280.4px;top:205.6px;width:74.2px;height:38.7px;line-height:40.2px">57,00</div>
<div class="cell g num" style="left:354.6px;top:205.6px;width:74.9px;height:38.7px;line-height:40.2px">71,3%</div>
<div class="cell g" style="left:429.5px;top:205.6px;width:389.8px;height:38.7px"></div>
<div class="cm" style="top:206.8px"><span class="i1"><svg class="ic" style="margin-top:-0.6px;margin-left:-0.4px" width="11.2" height="10.8" viewBox="0 0 11.2 10.8"><ellipse cx="6.1" cy="4.8" rx="5.1" ry="2.7" transform="rotate(-41 6.1 4.8)" fill="#f4f4f4" stroke="#1c1c1c" stroke-width="0.8"/><ellipse cx="9.1" cy="2.2" rx="1.5" ry="1.3" transform="rotate(-41 9.1 2.2)" fill="#1c1c1c"/><circle cx="6.6" cy="4.3" r="1.05" fill="#1c1c1c"/><path d="M1.6 5.6L4.2 6.2L5.2 9.2L3.6 8L1.5 8.2L2.7 7Z" fill="#1c1c1c" stroke="#1c1c1c" stroke-width="0.5" stroke-linejoin="round"/><ellipse cx="1.7" cy="9" rx="1.5" ry="0.8" transform="rotate(-41 1.7 9)" fill="none" stroke="#1c1c1c" stroke-width="0.6"/></svg></span><span style="letter-spacing:0.077px">Margem excelente! Você tem um modelo muito saudável, mas fique atento à concorrência. Se</span><br><span style="letter-spacing:0.025px">estiver vendendo menos do que gostaria, talvez precise ajustar sua estratégia de precificação ou</span><br><span style="letter-spacing:0.071px">marketing.</span></div>
<div class="cell w txt" style="left:65.5px;top:244.3px;width:65.0px;height:38.7px;line-height:40.2px">Produto C</div>
<div class="cell w num" style="left:130.5px;top:244.3px;width:74.9px;height:38.7px;line-height:40.2px">12,00</div>
<div class="cell w num" style="left:205.4px;top:244.3px;width:75.0px;height:38.7px;line-height:40.2px">10,00</div>
<div class="cell g num" style="left:280.4px;top:244.3px;width:74.2px;height:38.7px;line-height:40.2px">2,00</div>
<div class="cell g num" style="left:354.6px;top:244.3px;width:74.9px;height:38.7px;line-height:40.2px">16,7%</div>
<div class="cell g" style="left:429.5px;top:244.3px;width:389.8px;height:38.7px"></div>
<div class="cm" style="top:245.5px"><span class="i1"><svg class="ic" width="10.8" height="9.7" viewBox="0 0 10 9"><path d="M5 0.8L9.3 8.2H0.7Z" fill="none" stroke="#222" stroke-width="0.9" stroke-linejoin="round"/><path d="M5 3.2V5.6M5 6.5V7.2" stroke="#222" stroke-width="0.9"/></svg></span><span style="letter-spacing:-0.015px">Margem baixa. Você ainda está em um patamar perigoso. Pequenas oscilações nos custos podem</span><br><span style="letter-spacing:0.082px">comprometer sua lucratividade. Tente renegociar preços com fornecedores ou ajustar o preço de</span><br><span style="letter-spacing:-0.283px">venda.</span></div>
<div class="cell w txt" style="left:65.5px;top:283px;width:65.0px;height:38.6px;line-height:40.1px">Produto D</div>
<div class="cell w num" style="left:130.5px;top:283px;width:74.9px;height:38.6px;line-height:40.1px">35,00</div>
<div class="cell w num" style="left:205.4px;top:283px;width:75.0px;height:38.6px;line-height:40.1px">11,00</div>
<div class="cell g num" style="left:280.4px;top:283px;width:74.2px;height:38.6px;line-height:40.1px">24,00</div>
<div class="cell g num" style="left:354.6px;top:283px;width:74.9px;height:38.6px;line-height:40.1px">68,6%</div>
<div class="cell g" style="left:429.5px;top:283px;width:389.8px;height:38.6px"></div>
<div class="cm" style="top:284.2px"><span class="i1"><svg class="ic" style="margin-top:-0.6px;margin-left:-0.4px" width="11.2" height="10.8" viewBox="0 0 11.2 10.8"><ellipse cx="6.1" cy="4.8" rx="5.1" ry="2.7" transform="rotate(-41 6.1 4.8)" fill="#f4f4f4" stroke="#1c1c1c" stroke-width="0.8"/><ellipse cx="9.1" cy="2.2" rx="1.5" ry="1.3" transform="rotate(-41 9.1 2.2)" fill="#1c1c1c"/><circle cx="6.6" cy="4.3" r="1.05" fill="#1c1c1c"/><path d="M1.6 5.6L4.2 6.2L5.2 9.2L3.6 8L1.5 8.2L2.7 7Z" fill="#1c1c1c" stroke="#1c1c1c" stroke-width="0.5" stroke-linejoin="round"/><ellipse cx="1.7" cy="9" rx="1.5" ry="0.8" transform="rotate(-41 1.7 9)" fill="none" stroke="#1c1c1c" stroke-width="0.6"/></svg></span><span style="letter-spacing:0.077px">Margem excelente! Você tem um modelo muito saudável, mas fique atento à concorrência. Se</span><br><span style="letter-spacing:0.025px">estiver vendendo menos do que gostaria, talvez precise ajustar sua estratégia de precificação ou</span><br><span style="letter-spacing:0.071px">marketing.</span></div>
<div class="cell w txt" style="left:65.5px;top:321.6px;width:65.0px;height:38.0px;line-height:39.5px">Produto E</div>
<div class="cell w num" style="left:130.5px;top:321.6px;width:74.9px;height:38.0px;line-height:39.5px">18,00</div>
<div class="cell w num" style="left:205.4px;top:321.6px;width:75.0px;height:38.0px;line-height:39.5px">17,00</div>
<div class="cell g num" style="left:280.4px;top:321.6px;width:74.2px;height:38.0px;line-height:39.5px">1,00</div>
<div class="cell g num" style="left:354.6px;top:321.6px;width:74.9px;height:38.0px;line-height:39.5px">5,6%</div>
<div class="cell g" style="left:429.5px;top:321.6px;width:389.8px;height:38.0px"></div>
<div class="cm" style="top:322.8px"><span class="i1"><svg class="ic" width="10.8" height="9.7" viewBox="0 0 10 9"><path d="M5 0.8L9.3 8.2H0.7Z" fill="none" stroke="#222" stroke-width="0.9" stroke-linejoin="round"/><path d="M5 3.2V5.6M5 6.5V7.2" stroke="#222" stroke-width="0.9"/></svg></span><span style="letter-spacing:0.028px">Alerta! Sua margem é extremamente baixa. Isso significa que quase todo o seu faturamento está</span><br><span style="letter-spacing:0.035px">indo para cobrir os custos variáveis. Qualquer aumento nos custos pode te colocar no prejuízo!</span><br><span style="letter-spacing:0.030px">Avalie aumentar preços ou reduzir custos.</span></div>
<!-- table borders -->
<div class="bd" style="left:65.5px;top:166.5px;width:753.8px;height:1px"></div>
<div class="bd" style="left:65.5px;top:205.1px;width:753.8px;height:1px"></div>
<div class="bd" style="left:65.5px;top:243.8px;width:753.8px;height:1px"></div>
<div class="bd" style="left:65.5px;top:282.5px;width:753.8px;height:1px"></div>
<div class="bd" style="left:65.5px;top:321.1px;width:753.8px;height:1px"></div>
<div class="bd" style="left:65.5px;top:359.1px;width:753.8px;height:1px"></div>
<div class="bd" style="left:65.0px;top:154.7px;width:1px;height:204.9px"></div>
<div class="bd" style="left:130.0px;top:154.7px;width:1px;height:204.9px"></div>
<div class="bd" style="left:204.9px;top:154.7px;width:1px;height:204.9px"></div>
<div class="bd" style="left:279.9px;top:154.7px;width:1px;height:204.9px"></div>
<div class="bd" style="left:354.1px;top:154.7px;width:1px;height:204.9px"></div>
<div class="bd" style="left:429.0px;top:154.7px;width:1px;height:204.9px"></div>
<div class="bd" style="left:818.8px;top:154.7px;width:1px;height:204.9px"></div>
<!-- bottom bar -->
<div class="abs" style="left:0;top:456.8px;width:1024px;height:20px;background:#0a0a0a"></div>
<div class="abs" style="left:1011.3px;top:90px;width:13px;height:367px;background:#0a0a0a"></div>
<svg class="abs" style="left:15px;top:462px" width="30" height="10" viewBox="0 0 30 10"><path d="M5.8 1.2L2.6 4.8L5.8 8.4M24 1.2L27.2 4.8L24 8.4" fill="none" stroke="#8c8c8c" stroke-width="1"/></svg>
<div class="abs" style="left:75.3px;top:459.6px;width:44.2px;height:15.4px;background:#d0e5e4;border-radius:3px;border:0.6px solid #b9d6d5"></div>
<div class="abs tabt" style="left:82.2px;top:461.5px;color:#3a3a3a;letter-spacing:-0.33px">INICIAL</div>
<div class="abs" style="left:122px;top:460px;width:1px;height:14.5px;background:#4a4a4a"></div>
<div class="abs" style="left:125.4px;top:456.8px;width:53.2px;height:18.1px;background:#ffffff;border-radius:0 0 3px 3px"></div>
<div class="abs tabt" style="left:131px;top:461px;color:#303030;font-weight:bold;letter-spacing:-0.2px">MARGEM</div>
<div class="abs" style="left:131px;top:472.4px;width:41.8px;height:1.2px;background:#1f8f4f"></div>
<div class="abs" style="left:181px;top:460px;width:1px;height:14.5px;background:#4a4a4a"></div>
<div class="abs tabt" style="left:191.2px;top:461.5px;color:#e2e2e2;letter-spacing:-0.62px">SIMULACOES</div>
<div class="abs" style="left:255.3px;top:460px;width:1px;height:14.5px;background:#4a4a4a"></div>
<svg class="abs" style="left:283px;top:462px" width="10" height="10" viewBox="0 0 10 10"><path d="M5 1.2V8.8M1.2 5H8.8" stroke="#e0e0e0" stroke-width="1.1"/></svg>
<svg class="abs" style="left:615px;top:462px" width="4" height="10" viewBox="0 0 4 10"><circle cx="2" cy="2.3" r="0.75" fill="#c8c8c8"/><circle cx="2" cy="5" r="0.75" fill="#c8c8c8"/><circle cx="2" cy="7.7" r="0.75" fill="#c8c8c8"/></svg>
<!-- horizontal scrollbar -->
<div class="abs" style="left:628px;top:462px;width:385px;height:10.4px;background:#161616;border-radius:5px"></div>
<svg class="abs" style="left:630px;top:463px" width="6" height="8" viewBox="0 0 6 8"><path d="M5 1V7L1 4Z" fill="#b4b4b4"/></svg>
<div class="abs" style="left:639.3px;top:464.2px;width:354px;height:5.9px;background:#a6a6a6;border-radius:3px"></div>
<svg class="abs" style="left:1004px;top:463px" width="6" height="8" viewBox="0 0 6 8"><path d="M1 1V7L5 4Z" fill="#b4b4b4"/></svg>
<!-- vertical scrollbar -->
<div class="abs" style="left:1013px;top:93px;width:10.4px;height:364px;background:#161616;border-radius:5px"></div>
<svg class="abs" style="left:1014.3px;top:95px" width="8" height="6" viewBox="0 0 8 6"><path d="M1 5H7L4 1Z" fill="#b4b4b4"/></svg>
<div class="abs" style="left:1015.6px;top:103.5px;width:5.5px;height:295.3px;background:#a6a6a6;border-radius:3px"></div>
<svg class="abs" style="left:1014.3px;top:449.5px" width="8" height="6" viewBox="0 0 8 6"><path d="M1 1H7L4 5Z" fill="#b4b4b4"/></svg>
</div>
</body>
</html>
